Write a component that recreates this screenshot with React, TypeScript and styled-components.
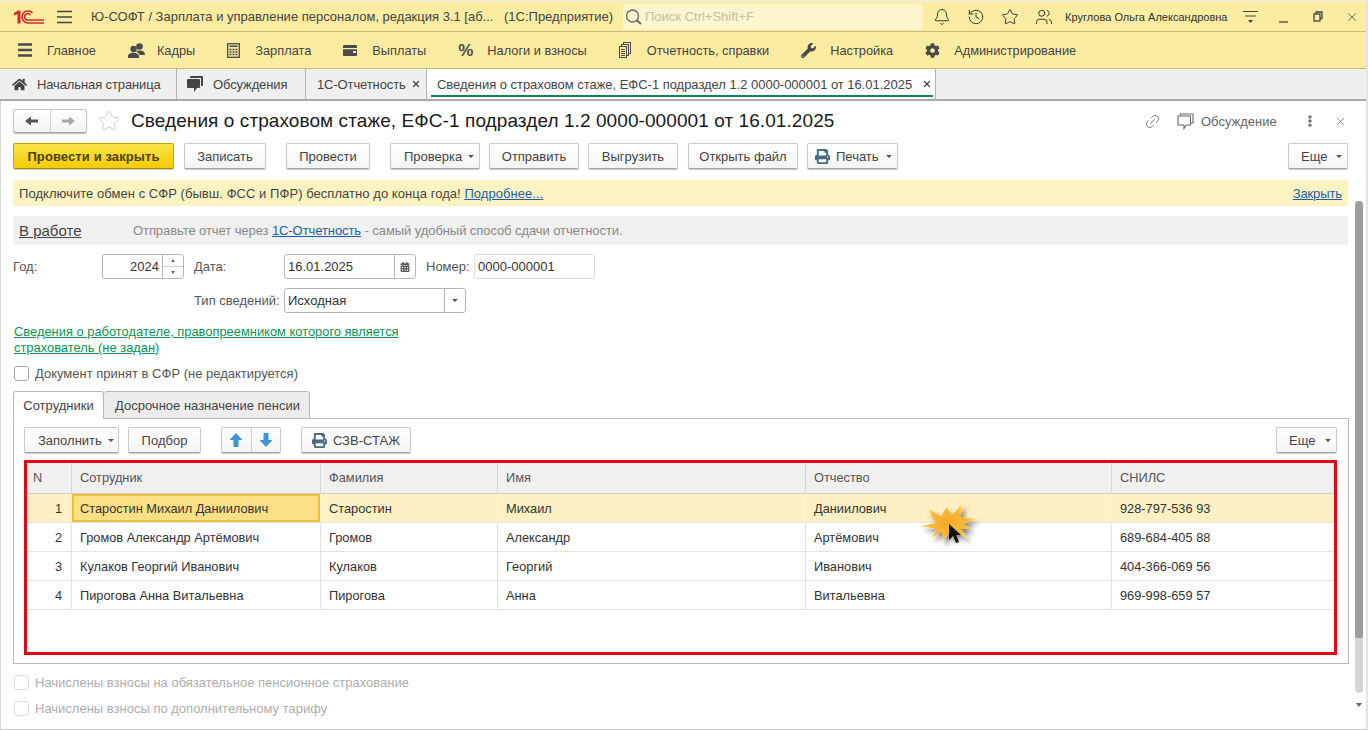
import React from "react";
import styled, { createGlobalStyle } from "styled-components";
import { Bell, History, Star, Users, Link2, X } from "lucide-react";
import { FaHome, FaWrench, FaCog, FaPrint, FaCalendarAlt, FaEllipsisV } from "react-icons/fa";

const Global = createGlobalStyle`
  html, body { margin: 0; padding: 0; width: 1368px; height: 730px; overflow: hidden; background: #fff; }
  body { font-family: "Liberation Sans", Arial, sans-serif; font-size: 13px; color: #333; }
  * { box-sizing: border-box; }
`;

const Page = styled.div`
  width: 1368px; height: 730px; display: flex; flex-direction: column; position: relative; overflow: hidden;
  border-bottom: 1px solid #c8c8c8; border-right: 2px solid #e4e4e4;
`;
const Spacer = styled.span<{ $w: number }>`width: ${(p) => p.$w}px; flex: none;`;
const TitleBar = styled.div`
  height: 32px; flex: none; background: #fbeca2; border-top: 2px solid #f3eed2; border-bottom: 1px solid #c9b978;
  display: flex; align-items: center; padding-left: 14px; color: #444;
  svg { flex: none; }
`;
const TitleText = styled.span`
  white-space: nowrap; margin-left: 18px; width: 522px; color: #444; display: flex; justify-content: space-between; flex: none;
`;
const Search = styled.div`
  width: 300px; height: 26px; margin-left: 10px; background: #fdf5cd; border-radius: 2px; display: flex; align-items: center; padding-left: 2px; color: #c4c0a8; gap: 2px; flex: none;
`;
const TopIcons = styled.div`
  display: flex; align-items: center; margin-left: 10px; gap: 16px; color: #333; flex: none;
`;
const UserName = styled.span`
  font-size: 11px; margin-left: 12px; white-space: nowrap; color: #333; width: 164px; flex: none; letter-spacing: .02px;
`;
const WinButtons = styled.div`
  display: flex; align-items: center; margin-left: 14px; color: #444; flex: none;
`;
const SectionBar = styled.div`
  height: 37px; flex: none; background: #fbeca2; border-bottom: 1px solid #c9b978; display: flex; align-items: center; padding-left: 18px; gap: 32px; font-size: 12.8px;
`;
const SectionItem = styled.div<{ $gap?: number }>`
  display: flex; align-items: center; gap: ${(p) => p.$gap ?? 14}px; color: #444; white-space: nowrap;
  svg { color: #4a4a4a; flex: none; }
`;
const Percent = styled.span`font-size: 17px; font-weight: bold; color: #4a4a4a; line-height: 1; width: 15px;`;
const TabBar = styled.div`
  height: 32px; flex: none; background: #efefef; border-bottom: 2px solid #a9a9a9; display: flex; align-items: stretch;
`;
const TopTab = styled.div<{ $active?: boolean; $w: number; $pl: number; $gap?: number }>`
  width: ${(p) => p.$w}px; display: flex; align-items: center; gap: ${(p) => p.$gap ?? 10}px; padding-left: ${(p) => p.$pl}px; border-right: 1px solid #b4b4b4; color: #444; white-space: nowrap; position: relative;
  letter-spacing: ${(p) => (p.$active ? "-.03px" : "-.12px")};
  background: ${(p) => (p.$active ? "#fff" : "transparent")};
  svg { color: #444; flex: none; }
`;
const ActiveLine = styled.span`
  position: absolute; left: 4px; right: 2px; bottom: 2px; height: 2px; background: #0b8a4f;
`;
const TabClose = styled(X)`margin-left: auto; margin-right: 7px;`;
const Content = styled.div`
  flex: 1; display: flex; flex-direction: column; padding: 8px 18px 0 12px; border-left: 1px solid #d8d8d8; position: relative;
`;
const HeadRow = styled.div`height: 24px; display: flex; align-items: center; flex: none;`;
const NavGroup = styled.div`
  width: 74px; height: 24px; display: flex; border: 1px solid #c6c6c6; border-bottom-color: #a8a8a8; border-radius: 3px; background: linear-gradient(#fff, #f3f3f3); box-shadow: 0 1px 1px #bbb;
`;
const NavCell = styled.div`
  flex: 1; display: flex; align-items: center; justify-content: center;
  & + & { border-left: 1px solid #d0d0d0; }
`;
const DocTitle = styled.h1`
  font-size: 19px; letter-spacing: .08px; font-weight: normal; margin: 0 0 0 10px; color: #1a1a1a; white-space: nowrap;
`;
const HeadRight = styled.div`
  margin-left: auto; display: flex; align-items: center; color: #666; padding-right: 1px;
`;
const TiltedLink = styled(Link2)`transform: rotate(-45deg);`;
const Discuss = styled.span`margin-left: 7px; color: #666; width: 76px; white-space: nowrap;`;
const Toolbar = styled.div<{ $mt?: number }>`display: flex; align-items: center; margin-top: ${(p) => p.$mt ?? 10}px; height: 26px; flex: none;`;
const Btn = styled.div<{ $w: number; $ml?: number; $primary?: boolean; $auto?: boolean; $pl?: number }>`
  width: ${(p) => p.$w}px; height: 26px; flex: none; margin-left: ${(p) => (p.$auto ? "auto" : `${p.$ml ?? 0}px`)};
  display: flex; align-items: center; justify-content: ${(p) => (p.$pl ? "flex-start" : "center")}; gap: 6px; white-space: nowrap; border-radius: 2px; color: #444;
  padding-left: ${(p) => p.$pl ?? 0}px;
  border: 1px solid ${(p) => (p.$primary ? "#c9a400" : "#c9c9c9")}; border-bottom-color: ${(p) => (p.$primary ? "#a88a00" : "#a6a6a6")};
  background: ${(p) => (p.$primary ? "linear-gradient(#fbe44a, #f4cb06)" : "linear-gradient(#fff, #f4f4f4)")};
  box-shadow: 0 1px 1px rgba(0,0,0,.22);
  font-weight: ${(p) => (p.$primary ? "bold" : "normal")};
  letter-spacing: ${(p) => (p.$primary ? ".1px" : "0")};
  ${(p) => (p.$primary ? "color: #4a3f00;" : "")}
  svg { color: #4a6a85; flex: none; }
`;
const Caret = styled.i`
  width: 0; height: 0; border-left: 3px solid transparent; border-right: 3px solid transparent; border-top: 3px solid #555; display: inline-block;
`;
const BtnCaret = styled(Caret)`margin-left: auto; margin-right: 5px;`;
const Notice = styled.div`
  height: 26px; margin-top: 11px; background: #fdf3c2; display: flex; align-items: center; padding: 0 6px; color: #444; flex: none;
`;
const NoticeText = styled.span`letter-spacing: .05px;`;
const A = styled.span`color: #1a5fa8; text-decoration: underline;`;
const NoticeClose = styled(A)`margin-left: auto; letter-spacing: -.1px;`;
const Status = styled.div`
  height: 29px; margin-top: 10px; background: #f0f0f0; display: flex; align-items: center; padding-left: 6px; color: #888; flex: none;
`;
const StatusName = styled.span`font-size: 15px; color: #444; text-decoration: underline; width: 114px;`;
const StatusText = styled.span`letter-spacing: -.08px;`;
const FormRow = styled.div<{ $mt: number }>`display: flex; align-items: center; height: 25px; margin-top: ${(p) => p.$mt}px; flex: none;`;
const Label = styled.span<{ $w: number; $ml?: number }>`
  width: ${(p) => p.$w}px; margin-left: ${(p) => p.$ml ?? 0}px; flex: none; color: #555; white-space: nowrap;
`;
const Field = styled.div<{ $w: number; $soft?: boolean }>`
  width: ${(p) => p.$w}px; height: 25px; flex: none; border: 1px solid ${(p) => (p.$soft ? "#dcdcdc" : "#b5b5b5")}; border-radius: 3px; display: flex; align-items: stretch; background: #fff; color: #333;
`;
const FieldText = styled.span<{ $right?: boolean }>`
  flex: 1; display: flex; align-items: center; padding: 0 3px; justify-content: ${(p) => (p.$right ? "flex-end" : "flex-start")};
`;
const FieldSide = styled.span<{ $w: number }>`
  width: ${(p) => p.$w}px; flex: none; border-left: 1px solid #b5b5b5; display: flex; align-items: center; justify-content: center; color: #555;
`;
const Spin = styled(FieldSide)`flex-direction: column; gap: 0;`;
const SpinCell = styled.span`
  flex: 1; width: 100%; display: flex; align-items: center; justify-content: center;
  & + & { border-top: 1px solid #d0d0d0; }
`;
const TinyUp = styled.i`width: 0; height: 0; border-left: 2px solid transparent; border-right: 2px solid transparent; border-bottom: 3px solid #666;`;
const TinyDown = styled.i`width: 0; height: 0; border-left: 2px solid transparent; border-right: 2px solid transparent; border-top: 3px solid #666;`;
const GreenLink = styled.div`
  margin-top: 11px; margin-left: 1px; width: 400px; line-height: 16px; color: #0b9455; text-decoration: underline; font-size: 12.9px; white-space: nowrap; flex: none;
`;
const CheckRow = styled.div<{ $mt: number; $off?: boolean }>`
  display: flex; align-items: center; gap: 6px; margin-top: ${(p) => p.$mt}px; margin-left: 1px; height: 16px; flex: none; color: ${(p) => (p.$off ? "#adadad" : "#555")};
`;
const Box = styled.span<{ $off?: boolean }>`
  width: 15px; height: 15px; border: 1px solid ${(p) => (p.$off ? "#dedede" : "#a8a8a8")}; border-radius: 3px; background: #fff; flex: none;
`;
const Tabs = styled.div`display: flex; margin-top: 10px; height: 28px; align-items: flex-end; position: relative; z-index: 1; flex: none;`;
const Tab = styled.div<{ $active?: boolean; $w: number }>`
  width: ${(p) => p.$w}px; height: 28px; display: flex; align-items: center; justify-content: center; border: 1px solid #b8b8b8; border-bottom: ${(p) => (p.$active ? "1px solid #fff" : "1px solid #b8b8b8")}; border-radius: 3px 3px 0 0; color: #444; white-space: nowrap;
  background: ${(p) => (p.$active ? "#fff" : "#ececec")};
  ${(p) => (p.$active ? "" : "border-left: 0; padding-left: 2px;")}
`;
const Panel = styled.div`
  height: 246px; flex: none; margin-top: -1px; margin-right: -1px; border: 1px solid #b8b8b8; padding: 8px 11px 0 10px; display: flex; flex-direction: column;
`;
const ArrowGroup = styled.div`
  width: 60px; height: 26px; margin-left: 20px; display: flex; border: 1px solid #c9c9c9; border-bottom-color: #a6a6a6; border-radius: 2px; background: linear-gradient(#fff, #f4f4f4); box-shadow: 0 1px 1px rgba(0,0,0,.22);
`;
const ArrowCell = styled.div`
  flex: 1; display: flex; align-items: center; justify-content: center;
  & + & { border-left: 1px solid #d0d0d0; }
`;
const RedFrame = styled.div`
  height: 195px; margin-top: 7px; border: 3px solid #e30613; flex: none; font-size: 12.8px;
`;
const COLS = "45px 249px 177px 308px 306px 1fr";
const Grid = styled.div`display: grid; grid-template-columns: ${COLS};`;
const HeadCell = styled.div`
  height: 31px; background: #f0f0f0; border-right: 1px solid #d8d8d8; border-bottom: 1px solid #cfcfcf; display: flex; align-items: center; padding: 0 0 2px 8px; color: #555;
  &:first-child { padding-left: 6px; }
  &:last-child { border-right: 0; }
`;
const Cell = styled.div<{ $sel?: boolean; $num?: boolean; $cur?: boolean }>`
  height: 29px; display: flex; align-items: center; color: #333; white-space: nowrap;
  justify-content: ${(p) => (p.$num ? "flex-end" : "flex-start")};
  padding: ${(p) => (p.$num ? "0 9px 0 0" : "0 0 0 8px")};
  border-right: 1px solid ${(p) => (p.$sel ? "#fff3d4" : "#e2e2e2")};
  border-bottom: 1px solid #e2e2e2;
  background: ${(p) => (p.$sel ? "#fdf0c4" : "#fff")};
  ${(p) => (p.$cur ? "background: #fde085; box-shadow: inset 0 0 0 2px #f0bf3a;" : "")}
  &:nth-child(6n) { border-right: 0; }
`;
const Scroll = styled.div`
  position: absolute; right: 3px; top: 100px; width: 8px; height: 492px; background: #d4d4d4; border-radius: 4px;
`;
const Thumb = styled.div`width: 8px; height: 437px; background: #9d9d9d; border-radius: 4px 4px 2px 2px;`;
const ScrollArrow = styled.div`
  position: absolute; right: 4px; top: 602px; width: 0; height: 0; border-left: 3px solid transparent; border-right: 3px solid transparent; border-top: 4px solid #666;
`;
const Burst = styled.svg`position: absolute; left: 918px; top: 499px; pointer-events: none;`;

const Logo = () => (
  <svg width="30" height="14" viewBox="0 0 30 14">
    <path d="M0 3 L4 .5 H6.5 V13.5 H3.5 V4 L0 5.5Z" fill="#d6282b" />
    <path d="M18.5 3 A6 6 0 1 0 14.5 13 H30 M16.5 5.2 A3.2 3.2 0 1 0 14.5 10 H30" fill="none" stroke="#d6282b" strokeWidth="1.5" />
  </svg>
);
const Hamburger = () => (
  <svg width="16" height="14" viewBox="0 0 16 14" stroke="#444" strokeWidth="1.3"><path d="M0 1.5H15M0 7H15M0 12.5H15" /></svg>
);
const MainMenu = () => (
  <svg width="15" height="14" viewBox="0 0 15 14" stroke="#4a4a4a" strokeWidth="2.4"><path d="M0 1.5H14M0 7H14M0 12.5H14" /></svg>
);
const PeopleIcon = () => (
  <svg width="17" height="15" viewBox="0 0 17 15" fill="#4a4a4a">
    <circle cx="11.5" cy="3.5" r="3.3" />
    <path d="M8 8.5C10 7 13.5 7 15.5 8.5C16.6 9.3 17 10.5 17 12H11.5C11.3 10.8 10 9.5 8 8.5Z" />
    <circle cx="5.6" cy="6" r="3.2" />
    <path d="M0 15V13.2C0 11 2.5 9.8 5.6 9.8S11 11 11 13.2V15Z" />
  </svg>
);
const CalcIcon = () => (
  <svg width="13" height="15" viewBox="0 0 13 15" fill="none" stroke="#4a4a4a">
    <rect x=".7" y=".7" width="11.6" height="13.6" strokeWidth="1.3" />
    <path d="M2.5 3.2H10.5" strokeWidth="1.6" />
    <path d="M2.5 6.5H4.5M5.5 6.5H7.5M8.5 6.5H10.5M2.5 9H4.5M5.5 9H7.5M8.5 9H10.5M2.5 11.5H4.5M5.5 11.5H7.5M8.5 11.5H10.5" strokeWidth="1.5" />
  </svg>
);
const WalletIcon = () => (
  <svg width="14" height="11" viewBox="0 0 14 11"><path fill="#4a4a4a" d="M1 0H13A1 1 0 0 1 14 1V3H0V1A1 1 0 0 1 1 0ZM0 4.2H14V10A1 1 0 0 1 13 11H1A1 1 0 0 1 0 10ZM10 6V8H13V6Z" /></svg>
);
const DocsIcon = () => (
  <svg width="12" height="16" viewBox="0 0 12 16" fill="#fbeca2" stroke="#4a4a4a" strokeWidth="1"><rect x="4.5" y=".5" width="7" height="11" /><rect x="2.5" y="2.5" width="7" height="11" /><rect x=".5" y="4.5" width="7" height="11" /><path d="M2 7.5H6M2 9.5H6M2 11.5H6M2 13.5H6" /></svg>
);
const CommentsIcon = () => (
  <svg width="16" height="16" viewBox="0 0 16 16"><path fill="#444" d="M4 0H15A1 1 0 0 1 16 1V9A1 1 0 0 1 15 10H14V2H3V1A1 1 0 0 1 4 0Z" /><path fill="#444" d="M1 3H12A1 1 0 0 1 13 4V11A1 1 0 0 1 12 12H10L7 16V12H1A1 1 0 0 1 0 11V4A1 1 0 0 1 1 3Z" /></svg>
);
const DiscussIcon = () => (
  <svg width="17" height="17" viewBox="0 0 17 17" fill="none" stroke="#666" strokeWidth="1.1"><path d="M3.5 2.5V1H16V10H14" /><path d="M1 3H13.5V12H9.5L7 15.5V12H1Z" /></svg>
);
const BlockArrow = ({ dir, color }: { dir: "up" | "down"; color: string }) => (
  <svg width="14" height="14" viewBox="0 0 14 14"><path fill={color} transform={dir === "down" ? "rotate(180 7 7)" : undefined} d="M7 0 L13.5 7 H9.5 V14 H4.5 V7 H.5Z" /></svg>
);
const NavArrow = ({ dir, color }: { dir: "left" | "right"; color: string }) => (
  <svg width="13" height="10" viewBox="0 0 13 10"><path fill={color} transform={dir === "right" ? "rotate(180 6.5 5)" : undefined} d="M0 5 L6 .5 V3.5 H13 V6.5 H6 V9.5Z" /></svg>
);
const Lens = () => (
  <svg width="18" height="18" viewBox="0 0 18 18" fill="none" stroke="#666" strokeWidth="1.3"><circle cx="7.5" cy="8" r="6" /><path d="M12 12.5L16 16" strokeWidth="2" /></svg>
);
const SplitMenu = () => (
  <svg width="16" height="16" viewBox="0 0 16 16" stroke="#444" strokeWidth="1.1" fill="#444"><path d="M0 2.5H15M2 7H13" /><path d="M5 11H10L7.5 14Z" stroke="none" /></svg>
);
const Minimize = () => (
  <svg width="10" height="14" viewBox="0 0 10 14" stroke="#444" strokeWidth="1.3"><path d="M0 12H9" /></svg>
);
const Restore = () => (
  <svg width="10" height="11" viewBox="0 0 10 11" fill="none" stroke="#444" strokeWidth="1.3"><rect x="1" y="3" width="6" height="7" /><path d="M3 3V1H9V7.5H7" /></svg>
);

const rows = [
  ["1", "Старостин Михаил Даниилович", "Старостин", "Михаил", "Даниилович", "928-797-536 93"],
  ["2", "Громов Александр Артёмович", "Громов", "Александр", "Артёмович", "689-684-405 88"],
  ["3", "Кулаков Георгий Иванович", "Кулаков", "Георгий", "Иванович", "404-366-069 56"],
  ["4", "Пирогова Анна Витальевна", "Пирогова", "Анна", "Витальевна", "969-998-659 57"],
];
const heads = ["N", "Сотрудник", "Фамилия", "Имя", "Отчество", "СНИЛС"];

export default function App() {
  return (
    <Page>
      <Global />
      <TitleBar>
        <Logo />
        <Spacer $w={13} />
        <Hamburger />
        <TitleText>
          <span>Ю-СОФТ / Зарплата и управление персоналом, редакция 3.1 [аб...</span>
          <span>(1С:Предприятие)</span>
        </TitleText>
        <Search><Lens />Поиск Ctrl+Shift+F</Search>
        <TopIcons>
          <Bell size={18} strokeWidth={1.3} />
          <History size={18} strokeWidth={1.3} />
          <Star size={18} strokeWidth={1.3} />
          <Users size={18} strokeWidth={1.3} />
        </TopIcons>
        <UserName>Круглова Ольга Александровна</UserName>
        <WinButtons>
          <SplitMenu />
          <Spacer $w={20} />
          <Minimize />
          <Spacer $w={24} />
          <Restore />
          <Spacer $w={22} />
          <X size={14} strokeWidth={1.2} />
        </WinButtons>
      </TitleBar>
      <SectionBar>
        <SectionItem><MainMenu />Главное</SectionItem>
        <SectionItem $gap={12}><PeopleIcon />Кадры</SectionItem>
        <SectionItem $gap={15}><CalcIcon />Зарплата</SectionItem>
        <SectionItem $gap={15}><WalletIcon />Выплаты</SectionItem>
        <SectionItem><Percent>%</Percent>Налоги и взносы</SectionItem>
        <SectionItem $gap={16}><DocsIcon />Отчетность, справки</SectionItem>
        <SectionItem><FaWrench size={15} />Настройка</SectionItem>
        <SectionItem><FaCog size={15} />Администрирование</SectionItem>
      </SectionBar>
      <TabBar>
        <TopTab $w={177} $pl={12}><FaHome size={15} />Начальная страница</TopTab>
        <TopTab $w={129} $pl={10}><CommentsIcon />Обсуждения</TopTab>
        <TopTab $w={121} $pl={11} $gap={5}>1С-Отчетность<TabClose size={10} strokeWidth={3} /></TopTab>
        <TopTab $w={509} $pl={10} $active>Сведения о страховом стаже, ЕФС-1 подраздел 1.2 0000-000001 от 16.01.2025<TabClose size={10} strokeWidth={3} /><ActiveLine /></TopTab>
      </TabBar>
      <Content>
        <HeadRow>
          <NavGroup>
            <NavCell><NavArrow dir="left" color="#555" /></NavCell>
            <NavCell><NavArrow dir="right" color="#a8a8a8" /></NavCell>
          </NavGroup>
          <Spacer $w={10} />
          <Star size={24} strokeWidth={0.8} color="#c4c4c4" />
          <DocTitle>Сведения о страховом стаже, ЕФС-1 подраздел 1.2 0000-000001 от 16.01.2025</DocTitle>
          <HeadRight>
            <TiltedLink size={17} strokeWidth={1.1} />
            <Spacer $w={16} />
            <DiscussIcon />
            <Discuss>Обсуждение</Discuss>
            <Spacer $w={27} />
            <FaEllipsisV size={12} color="#777" />
            <Spacer $w={18} />
            <X size={13} strokeWidth={1.3} />
          </HeadRight>
        </HeadRow>
        <Toolbar>
          <Btn $w={161} $primary>Провести и закрыть</Btn>
          <Btn $w={82} $ml={10}>Записать</Btn>
          <Btn $w={84} $ml={20}>Провести</Btn>
          <Btn $w={90} $ml={20} $pl={13}>Проверка<BtnCaret /></Btn>
          <Btn $w={90} $ml={9}>Отправить</Btn>
          <Btn $w={90} $ml={9}>Выгрузить</Btn>
          <Btn $w={110} $ml={10}>Открыть файл</Btn>
          <Btn $w={91} $ml={9} $pl={7}><FaPrint size={15} />Печать<BtnCaret /></Btn>
          <Btn $w={60} $auto $pl={12}>Еще<BtnCaret /></Btn>
        </Toolbar>
        <Notice>
          <NoticeText>Подключите обмен с СФР (бывш. ФСС и ПФР) бесплатно до конца года!&nbsp;<A>Подробнее...</A></NoticeText>
          <NoticeClose>Закрыть</NoticeClose>
        </Notice>
        <Status>
          <StatusName>В работе</StatusName>
          <StatusText>Отправьте отчет через <A>1С-Отчетность</A> - самый удобный способ сдачи отчетности.</StatusText>
        </Status>
        <FormRow $mt={9}>
          <Label $w={89}>Год:</Label>
          <Field $w={82}>
            <FieldText $right>2024</FieldText>
            <Spin $w={21}><SpinCell><TinyUp /></SpinCell><SpinCell><TinyDown /></SpinCell></Spin>
          </Field>
          <Label $w={90} $ml={10}>Дата:</Label>
          <Field $w={132}>
            <FieldText>16.01.2025</FieldText>
            <FieldSide $w={21}><FaCalendarAlt size={10} /></FieldSide>
          </Field>
          <Label $w={48} $ml={10}>Номер:</Label>
          <Field $w={121} $soft><FieldText>0000-000001</FieldText></Field>
        </FormRow>
        <FormRow $mt={9}>
          <Label $w={90} $ml={181}>Тип сведений:</Label>
          <Field $w={182}>
            <FieldText>Исходная</FieldText>
            <FieldSide $w={21}><Caret /></FieldSide>
          </Field>
        </FormRow>
        <GreenLink>Сведения о работодателе, правопреемником которого является<br />страхователь (не задан)</GreenLink>
        <CheckRow $mt={9}><Box />Документ принят в СФР (не редактируется)</CheckRow>
        <Tabs>
          <Tab $active $w={91}>Сотрудники</Tab>
          <Tab $w={206}>Досрочное назначение пенсии</Tab>
        </Tabs>
        <Panel>
          <Toolbar $mt={0}>
            <Btn $w={95} $pl={13}>Заполнить<BtnCaret /></Btn>
            <Btn $w={73} $ml={9}>Подбор</Btn>
            <ArrowGroup>
              <ArrowCell><BlockArrow dir="up" color="#3d94d6" /></ArrowCell>
              <ArrowCell><BlockArrow dir="down" color="#3d94d6" /></ArrowCell>
            </ArrowGroup>
            <Btn $w={110} $ml={20}><FaPrint size={15} />СЗВ-СТАЖ</Btn>
            <Btn $w={61} $auto $pl={12}>Еще<BtnCaret /></Btn>
          </Toolbar>
          <RedFrame>
            <Grid>
              {heads.map((h) => <HeadCell key={h}>{h}</HeadCell>)}
              {rows.map((r, i) =>
                r.map((c, j) => (
                  <Cell key={`${i}-${j}`} $sel={i === 0} $num={j === 0} $cur={i === 0 && j === 1}>{c}</Cell>
                ))
              )}
            </Grid>
          </RedFrame>
        </Panel>
        <CheckRow $mt={10} $off><Box $off />Начислены взносы на обязательное пенсионное страхование</CheckRow>
        <CheckRow $mt={10} $off><Box $off />Начислены взносы по дополнительному тарифу</CheckRow>
        <Scroll><Thumb /></Scroll>
        <ScrollArrow />
      </Content>
      <Burst width="70" height="56" viewBox="0 0 70 56">
        <defs>
          <filter id="sh" x="-30%" y="-30%" width="170%" height="170%">
            <feDropShadow dx="3" dy="4" stdDeviation="2.5" floodColor="#000" floodOpacity=".5" />
          </filter>
          <radialGradient id="gl" cx="50%" cy="50%" r="55%">
            <stop offset="0" stopColor="#f7a82a" />
            <stop offset=".6" stopColor="#f9b838" />
            <stop offset="1" stopColor="#fde27a" />
          </radialGradient>
        </defs>
        <path filter="url(#sh)" fill="url(#gl)" d="M2 27 L18 24 L10 10 L23 17 L29 8 L33 17 L45 4 L42 18 L58 20 L45 25 L54 30 L43 30 L50 40 L38 33 L37 41 L31 34 L25 43 L24 33 L13 39 L19 30 Z" />
        <path fill="#111" d="M31 25 L31 41 L35 37 L38 44 L41 43 L38 36 L43 36 Z" />
      </Burst>
    </Page>
  );
}
